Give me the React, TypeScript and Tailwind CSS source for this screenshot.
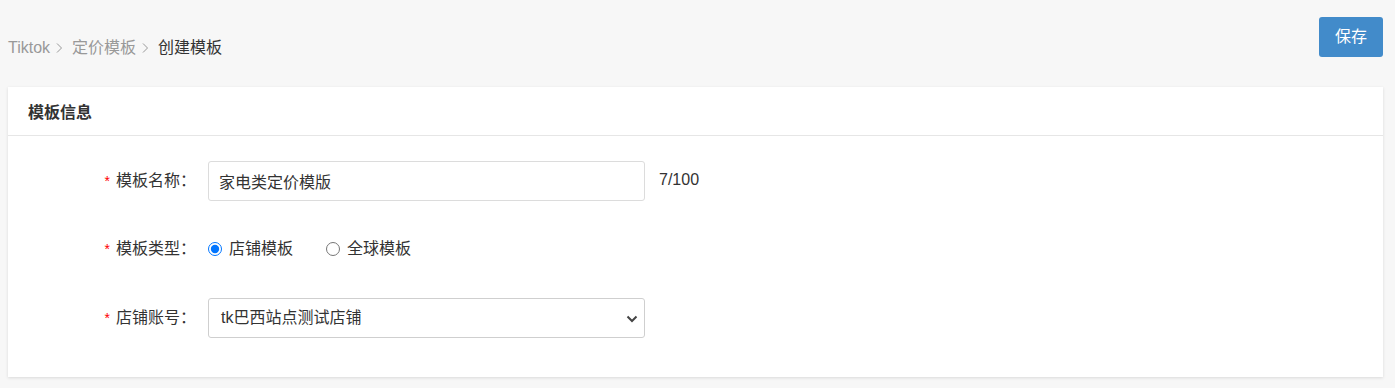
import React from "react";

const font = { fontFamily: '"Liberation Sans", Arial, "Noto Sans CJK SC", sans-serif' };

function Label({ text }: { text: string }) {
  return (
    <div className="w-[190px] shrink-0 text-right pr-[2px] text-[16px] text-[#333]">
      <span className="text-[#f00] mr-[6px] text-[14px]">*</span>
      {text}：
    </div>
  );
}

function Chevron() {
  return (
    <svg className="ml-[6px] mr-[9px]" width="7" height="12" viewBox="0 0 7 12">
      <path d="M1 1.5 L5.5 6 L1 10.5" fill="none" stroke="#999" strokeWidth="1" />
    </svg>
  );
}

export default function App() {
  return (
    <div className="min-h-[388px] bg-[#f7f7f7] pl-2 pr-[12px] pb-[11px]" style={font}>
      <div className="flex items-end justify-between pt-[17px]">
        <div className="flex items-center text-[16px] -mb-[2px] leading-[22px]">
          <span className="text-[#999]">Tiktok</span>
          <Chevron />
          <span className="text-[#999]">定价模板</span>
          <Chevron />
          <span className="text-[#333]">创建模板</span>
        </div>
        <button className="w-[64px] h-[40px] rounded-[3px] bg-[#428bca] text-white text-[16px]">
          保存
        </button>
      </div>

      <div className="mt-[30px] bg-white shadow-[0_1px_3px_rgba(0,0,0,0.12)]">
        <div className="h-[49px] flex items-center px-[20px] pt-[3px] border-b border-[#e6e6e6]">
          <span className="text-[16px] font-bold text-[#333]">模板信息</span>
        </div>
        <div className="pt-[25px] pb-[39px]">
          <div className="flex items-center h-[40px]">
            <Label text="模板名称" />
            <input
              readOnly
              value="家电类定价模版"
              className="ml-[10px] w-[437px] h-[40px] border border-[#dcdcdc] rounded-[3px] px-[10px] text-[16px] text-[#333] outline-none"
            />
            <span className="ml-[14px] text-[16px] text-[#333] -mt-[2px]">7/100</span>
          </div>
          <div className="flex items-center h-[40px] mt-[28px]">
            <Label text="模板类型" />
            <label className="ml-[10px] flex items-center text-[16px] text-[#333]">
              <input type="radio" name="t" defaultChecked className="m-0 w-[14px] h-[14px]" />
              <span className="ml-[7px]">店铺模板</span>
            </label>
            <label className="ml-[33px] flex items-center text-[16px] text-[#333]">
              <input type="radio" name="t" className="m-0 w-[14px] h-[14px]" />
              <span className="ml-[7px]">全球模板</span>
            </label>
          </div>
          <div className="flex items-center h-[40px] mt-[29px]">
            <Label text="店铺账号" />
            <div className="ml-[10px] relative w-[437px] h-[40px] border border-[#cfcfcf] rounded-[3px] flex items-center px-[12px] text-[16px] text-[#333]">
              <span>tk巴西站点测试店铺</span>
              <svg className="absolute right-[6px] top-[16px]" width="12" height="8" viewBox="0 0 12 8">
                <path d="M1.5 1.5 L6 6 L10.5 1.5" fill="none" stroke="#444" strokeWidth="2" />
              </svg>
            </div>
          </div>
        </div>
      </div>
    </div>
  );
}
